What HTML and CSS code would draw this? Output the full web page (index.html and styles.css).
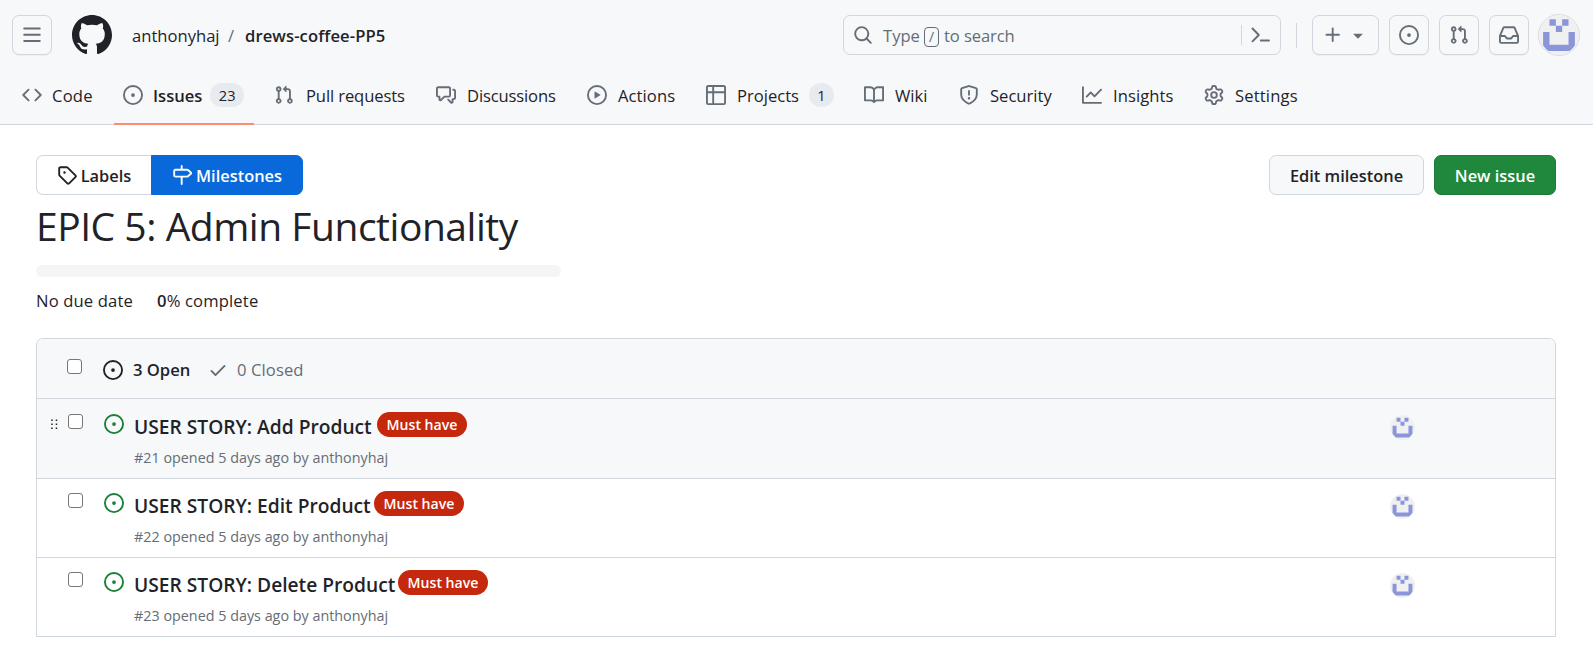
FILE: index.html
```html
<!DOCTYPE html>
<html lang="en">
<head>
<meta charset="utf-8">
<title>EPIC 5: Admin Functionality Milestone</title>
<link rel="stylesheet" href="styles.css">
</head>
<body>
<svg class="sprite" aria-hidden="true">
  <symbol id="issue" viewBox="0 0 16 16"><path d="M8 9.5a1.5 1.5 0 1 0 0-3 1.5 1.5 0 0 0 0 3Z"/><path d="M8 0a8 8 0 1 1 0 16A8 8 0 0 1 8 0ZM1.5 8a6.500 6.500 0 1 0 13 0 6.500 6.500 0 0 0-13 0Z"/></symbol>
  <symbol id="pull" viewBox="0 0 16 16"><path d="M1.500 3.250a2.250 2.250 0 1 1 3 2.122v5.256a2.251 2.251 0 1 1-1.500 0V5.372A2.250 2.250 0 0 1 1.500 3.250Zm5.677-.177L9.573.677A.250.250 0 0 1 10 .854V2.500h1A2.500 2.500 0 0 1 13.500 5v5.628a2.251 2.251 0 1 1-1.500 0V5a1 1 0 0 0-1-1h-1v1.646a.250.250 0 0 1-.427.177L7.177 3.427a.250.250 0 0 1 0-.354ZM3.750 2.500a.750.750 0 1 0 0 1.500.750.750 0 0 0 0-1.500Zm0 9.500a.750.750 0 1 0 0 1.500.750.750 0 0 0 0-1.500Zm8.250.750a.750.750 0 1 0 1.500 0 .750.750 0 0 0-1.500 0Z"/></symbol>
  <symbol id="avatar" viewBox="0 0 42 42"><circle cx="21" cy="21" r="21" fill="#f0f0f0"/><path fill="#8b96da" d="M11 4.500h6.700v6.700H11zM24.300 4.500H31v6.700h-6.700zM17.700 11.200h6.600v6.700h-6.600zM4.300 17.900H11v13.300h20V17.900h6.700v13.800c-1.700 2.500-3.500 4.500-5.700 6.200H10c-2.200-1.700-4-3.700-5.700-6.200z"/></symbol>
</svg>

<header class="header">
  <div class="topbar">
    <button class="square"><svg class="icon" viewBox="0 0 16 16"><path d="M1 2.750A.750.750 0 0 1 1.750 2h12.500a.750.750 0 0 1 0 1.500H1.750A.750.750 0 0 1 1 2.750Zm0 5A.750.750 0 0 1 1.750 7h12.500a.750.750 0 0 1 0 1.500H1.750A.750.750 0 0 1 1 7.750ZM1.750 12h12.500a.750.750 0 0 1 0 1.500H1.750a.750.750 0 0 1 0-1.500Z"/></svg></button>
    <svg class="logo" viewBox="0 0 16 16"><path d="M8 0c4.420 0 8 3.580 8 8a8.013 8.013 0 0 1-5.450 7.590c-.400.080-.550-.170-.550-.380 0-.270.010-1.130.010-2.200 0-.750-.250-1.230-.540-1.480 1.780-.200 3.650-.880 3.650-3.950 0-.880-.310-1.590-.820-2.150.080-.200.360-1.020-.080-2.120 0 0-.670-.220-2.200.820-.640-.180-1.320-.270-2-.270-.680 0-1.360.090-2 .270-1.530-1.030-2.200-.820-2.200-.820-.440 1.100-.160 1.920-.080 2.120-.510.560-.820 1.280-.820 2.150 0 3.060 1.860 3.750 3.640 3.950-.230.200-.440.550-.510 1.070-.460.210-1.610.550-2.330-.660-.150-.240-.600-.830-1.230-.820-.670.010-.270.380.010.530.340.190.730.900.820 1.130.160.450.680 1.310 2.690.940 0 .670.010 1.300.010 1.490 0 .210-.150.450-.550.380A7.995 7.995 0 0 1 0 8c0-4.420 3.580-8 8-8Z"/></svg>
    <div class="crumbs"><span class="owner">anthonyhaj</span><span class="slash">/</span><span class="repo">drews-coffee-PP5</span></div>
    <div class="search">
      <svg class="search-icon" viewBox="0 0 16 16"><path d="M10.680 11.740a6 6 0 0 1-7.922-8.982 6 6 0 0 1 8.982 7.922l3.040 3.040a.749.749 0 0 1-.326 1.275.749.749 0 0 1-.734-.215ZM11.500 7a4.499 4.499 0 1 0-8.997 0A4.499 4.499 0 0 0 11.500 7Z"/></svg>
      <span class="type">Type</span><kbd>/</kbd><span class="to-search">to search</span>
      <span class="rule"></span>
      <svg class="terminal" viewBox="0 0 19 16"><path d="M1.500 1.500 7.800 8l-6.300 6.300M9.800 13.500H18" fill="none" stroke="currentColor" stroke-width="1.900" stroke-linecap="round" stroke-linejoin="round"/></svg>
    </div>
    <span class="rule tall"></span>
    <button class="square plus">
      <svg class="icon" viewBox="0 0 16 16"><path d="M7.750 2a.750.750 0 0 1 .750.750V7h4.250a.750.750 0 0 1 0 1.500H8.500v4.250a.750.750 0 0 1-1.500 0V8.500H2.750a.750.750 0 0 1 0-1.500H7V2.750A.750.750 0 0 1 7.750 2Z"/></svg>
      <svg class="icon" viewBox="0 0 16 16"><path d="m4.427 7.427 3.396 3.396a.250.250 0 0 0 .354 0l3.396-3.396A.250.250 0 0 0 11.396 7H4.604a.250.250 0 0 0-.177.427Z"/></svg>
    </button>
    <button class="square"><svg class="icon"><use href="#issue"/></svg></button>
    <button class="square"><svg class="icon"><use href="#pull"/></svg></button>
    <button class="square"><svg class="icon" viewBox="0 0 16 16"><path d="M2.800 2.060A1.750 1.750 0 0 1 4.410 1h7.180c.700 0 1.333.417 1.610 1.060l2.740 6.395c.040.093.060.194.060.295v4.500A1.750 1.750 0 0 1 14.250 15H1.750A1.750 1.750 0 0 1 0 13.250v-4.500c0-.101.020-.202.060-.295Zm1.610.440a.250.250 0 0 0-.230.152L1.887 8H4.750a.750.750 0 0 1 .600.300L6.625 10h2.750l1.275-1.700a.750.750 0 0 1 .600-.300h2.863L11.820 2.652a.250.250 0 0 0-.230-.152Zm10.090 7h-2.875l-1.275 1.700a.750.750 0 0 1-.600.300h-3.500a.750.750 0 0 1-.600-.300L4.375 9.500H1.500v3.750c0 .138.112.250.250.250h12.500a.250.250 0 0 0 .250-.250Z"/></svg></button>
    <svg class="me"><use href="#avatar"/></svg>
  </div>
  <nav class="tabs">
    <a class="tab t-code"><svg class="icon" viewBox="0 0 16 16"><path d="m11.280 3.220 4.250 4.250a.750.750 0 0 1 0 1.060l-4.250 4.250a.749.749 0 0 1-1.275-.326.749.749 0 0 1 .215-.734L13.940 8l-3.720-3.720a.749.749 0 0 1 .326-1.275.749.749 0 0 1 .734.215Zm-6.560 0a.751.751 0 0 1 1.042.018.751.751 0 0 1 .018 1.042L2.060 8l3.720 3.720a.749.749 0 0 1-.326 1.275.749.749 0 0 1-.734-.215L.470 8.530a.750.750 0 0 1 0-1.060Z"/></svg><span>Code</span></a>
    <a class="tab t-issues active"><svg class="icon"><use href="#issue"/></svg><span>Issues</span><b class="counter">23</b></a>
    <a class="tab t-pulls"><svg class="icon"><use href="#pull"/></svg><span>Pull requests</span></a>
    <a class="tab t-disc"><svg class="icon" viewBox="0 0 16 16"><path d="M1.750 1h8.500c.966 0 1.750.784 1.750 1.750v5.500A1.750 1.750 0 0 1 10.250 10H7.061l-2.574 2.573A1.458 1.458 0 0 1 2 11.543V10h-.250A1.750 1.750 0 0 1 0 8.250v-5.500C0 1.784.784 1 1.750 1ZM1.500 2.750v5.500c0 .138.112.250.250.250h1a.750.750 0 0 1 .750.750v2.190l2.720-2.720a.749.749 0 0 1 .530-.220h3.500a.250.250 0 0 0 .250-.250v-5.500a.250.250 0 0 0-.250-.250h-8.500a.250.250 0 0 0-.250.250Zm13 2a.250.250 0 0 0-.250-.250h-.500a.750.750 0 0 1 0-1.500h.500c.966 0 1.750.784 1.750 1.750v5.500A1.750 1.750 0 0 1 14.250 12H14v1.543a1.458 1.458 0 0 1-2.487 1.030L9.220 12.280a.749.749 0 0 1 .326-1.275.749.749 0 0 1 .734.215l2.220 2.220v-2.190a.750.750 0 0 1 .750-.750h1a.250.250 0 0 0 .250-.250Z"/></svg><span>Discussions</span></a>
    <a class="tab t-actions"><svg class="icon" viewBox="0 0 16 16"><path d="M8 0a8 8 0 1 1 0 16A8 8 0 0 1 8 0ZM1.500 8a6.500 6.500 0 1 0 13 0 6.500 6.500 0 0 0-13 0Zm4.879-2.773 4.264 2.559a.250.250 0 0 1 0 .428l-4.264 2.559A.250.250 0 0 1 6 10.559V5.442a.250.250 0 0 1 .379-.215Z"/></svg><span>Actions</span></a>
    <a class="tab t-proj"><svg class="icon" viewBox="0 0 16 16"><path d="M0 1.750C0 .784.784 0 1.750 0h12.500C15.216 0 16 .784 16 1.750v12.500A1.750 1.750 0 0 1 14.250 16H1.750A1.750 1.750 0 0 1 0 14.250ZM6.500 6.500v8h7.750a.250.250 0 0 0 .250-.250V6.500Zm8-1.500V1.750a.250.250 0 0 0-.250-.250H6.500V5Zm-13 1.500v7.750c0 .138.112.250.250.250H5v-8ZM5 5V1.500H1.750a.250.250 0 0 0-.250.250V5Z"/></svg><span>Projects</span><b class="counter">1</b></a>
    <a class="tab t-wiki"><svg class="icon" viewBox="0 0 16 16"><path d="M0 1.750A.750.750 0 0 1 .750 1h4.253c1.227 0 2.317.590 3 1.501A3.743 3.743 0 0 1 11.006 1h4.245a.750.750 0 0 1 .750.750v10.500a.750.750 0 0 1-.750.750h-4.507a2.250 2.250 0 0 0-1.591.659l-.622.621a.750.750 0 0 1-1.060 0l-.622-.621A2.250 2.250 0 0 0 5.258 13H.750a.750.750 0 0 1-.750-.750Zm7.251 10.324.004-5.073-.002-2.253A2.250 2.250 0 0 0 5.003 2.500H1.500v9h3.757a3.750 3.750 0 0 1 1.994.574ZM8.755 4.750l-.004 7.322a3.752 3.752 0 0 1 1.992-.572H14.500v-9h-3.495a2.250 2.250 0 0 0-2.250 2.250Z"/></svg><span>Wiki</span></a>
    <a class="tab t-sec"><svg class="icon" viewBox="0 0 16 16"><path d="M7.467.133a1.748 1.748 0 0 1 1.066 0l5.250 1.680A1.750 1.750 0 0 1 15 3.480V7c0 1.566-.320 3.182-1.303 4.682-.983 1.498-2.585 2.813-5.032 3.855a1.697 1.697 0 0 1-1.330 0c-2.447-1.042-4.049-2.357-5.032-3.855C1.320 10.182 1 8.566 1 7V3.480a1.755 1.755 0 0 1 1.217-1.667Zm.610 1.429a.250.250 0 0 0-.153 0l-5.250 1.680a.250.250 0 0 0-.174.238V7c0 1.358.275 2.666 1.057 3.860.784 1.194 2.121 2.340 4.366 3.297a.196.196 0 0 0 .154 0c2.245-.956 3.582-2.104 4.366-3.298C13.225 9.666 13.500 8.360 13.500 7V3.480a.251.251 0 0 0-.174-.237l-5.250-1.680ZM8.750 4.750v3a.750.750 0 0 1-1.500 0v-3a.750.750 0 0 1 1.500 0ZM9 10.500a1 1 0 1 1-2 0 1 1 0 0 1 2 0Z"/></svg><span>Security</span></a>
    <a class="tab t-ins"><svg class="icon" viewBox="0 0 16 16"><path d="M1.500 1.750V13.500h13.750a.750.750 0 0 1 0 1.500H.750a.750.750 0 0 1-.750-.750V1.750a.750.750 0 0 1 1.500 0Zm14.280 2.530-5.250 5.250a.750.750 0 0 1-1.060 0L7 7.060 4.280 9.780a.751.751 0 0 1-1.042-.018.751.751 0 0 1-.018-1.042l3.250-3.250a.750.750 0 0 1 1.060 0L10 7.940l4.720-4.720a.751.751 0 0 1 1.042.018.751.751 0 0 1 .018 1.042Z"/></svg><span>Insights</span></a>
    <a class="tab t-set"><svg class="icon" viewBox="0 0 16 16"><path d="M8 0a8.200 8.200 0 0 1 .701.031C9.444.095 9.990.645 10.160 1.290l.288 1.107c.018.066.079.158.212.224.231.114.454.243.668.386.123.082.233.090.299.071l1.103-.303c.644-.176 1.392.021 1.820.630.270.385.506.792.704 1.218.315.675.111 1.422-.364 1.891l-.814.806c-.049.048-.098.147-.088.294.016.257.016.515 0 .772-.010.147.038.246.088.294l.814.806c.475.469.679 1.216.364 1.891a7.977 7.977 0 0 1-.704 1.217c-.428.610-1.176.807-1.820.630l-1.102-.302c-.067-.019-.177-.011-.300.071a5.909 5.909 0 0 1-.668.386c-.133.066-.194.158-.211.224l-.290 1.106c-.168.646-.715 1.196-1.458 1.260a8.006 8.006 0 0 1-1.402 0c-.743-.064-1.289-.614-1.458-1.260l-.289-1.106c-.018-.066-.079-.158-.212-.224a5.738 5.738 0 0 1-.668-.386c-.123-.082-.233-.090-.299-.071l-1.103.303c-.644.176-1.392-.021-1.820-.630a8.120 8.120 0 0 1-.704-1.218c-.315-.675-.111-1.422.363-1.891l.815-.806c.050-.048.098-.147.088-.294a6.214 6.214 0 0 1 0-.772c.010-.147-.038-.246-.088-.294l-.815-.806C.635 6.045.431 5.298.746 4.623a7.920 7.920 0 0 1 .704-1.217c.428-.610 1.176-.807 1.820-.630l1.102.302c.067.019.177.011.300-.071.214-.143.437-.272.668-.386.133-.066.194-.158.211-.224l.290-1.106C6.009.645 6.556.095 7.299.030 7.530.010 7.764 0 8 0Zm-.571 1.525c-.036.003-.108.036-.137.146l-.289 1.105c-.147.561-.549.967-.998 1.189-.173.086-.340.183-.500.290-.417.278-.970.423-1.529.270l-1.103-.303c-.109-.030-.175.016-.195.045-.220.312-.412.644-.573.990-.014.031-.021.110.059.190l.815.806c.411.406.562.957.530 1.456a4.709 4.709 0 0 0 0 .582c.032.499-.119 1.050-.530 1.456l-.815.806c-.081.080-.073.159-.059.190.162.346.353.677.573.989.020.030.085.076.195.046l1.102-.303c.560-.153 1.113-.008 1.530.270.161.107.328.204.501.290.447.222.850.629.997 1.189l.289 1.105c.029.109.101.143.137.146a6.600 6.600 0 0 0 1.142 0c.036-.003.108-.036.137-.146l.289-1.105c.147-.561.549-.967.998-1.189.173-.086.340-.183.500-.290.417-.278.970-.423 1.529-.270l1.103.303c.109.029.175-.016.195-.045.220-.313.411-.644.573-.990.014-.031.021-.110-.059-.190l-.815-.806c-.411-.406-.562-.957-.530-1.456a4.709 4.709 0 0 0 0-.582c-.032-.499.119-1.050.530-1.456l.815-.806c.081-.080.073-.159.059-.190a6.464 6.464 0 0 0-.573-.989c-.020-.030-.085-.076-.195-.046l-1.102.303c-.560.153-1.113.008-1.530-.270a4.440 4.440 0 0 0-.501-.290c-.447-.222-.850-.629-.997-1.189l-.289-1.105c-.029-.110-.101-.143-.137-.146a6.600 6.600 0 0 0-1.142 0ZM11 8a3 3 0 1 1-6 0 3 3 0 0 1 6 0ZM9.500 8a1.500 1.500 0 1 0-3.001.001A1.500 1.500 0 0 0 9.500 8Z"/></svg><span>Settings</span></a>
  </nav>
</header>

<main class="main">
  <div class="actions">
    <a class="btn labels"><svg class="icon" viewBox="0 0 16 16"><path d="M1 7.775V2.750C1 1.784 1.784 1 2.750 1h5.025c.464 0 .910.184 1.238.513l6.250 6.250a1.750 1.750 0 0 1 0 2.474l-5.026 5.026a1.750 1.750 0 0 1-2.474 0l-6.250-6.250A1.752 1.752 0 0 1 1 7.775Zm1.500 0c0 .066.026.130.073.177l6.250 6.250a.250.250 0 0 0 .354 0l5.025-5.025a.250.250 0 0 0 0-.354l-6.250-6.250a.250.250 0 0 0-.177-.073H2.750a.250.250 0 0 0-.250.250ZM6 5a1 1 0 1 1 0 2 1 1 0 0 1 0-2Z"/></svg><span>Labels</span></a>
    <a class="btn milestones"><svg class="icon" viewBox="0 0 16 16"><path d="M7.750 0a.750.750 0 0 1 .750.750V3h3.634c.414 0 .814.147 1.130.414l2.070 1.750a1.750 1.750 0 0 1 0 2.672l-2.070 1.750a1.750 1.750 0 0 1-1.130.414H8.500v5.250a.750.750 0 0 1-1.500 0V10H2.750A1.750 1.750 0 0 1 1 8.250v-3.500C1 3.784 1.784 3 2.750 3H7V.750A.750.750 0 0 1 7.750 0Zm4.384 8.500a.250.250 0 0 0 .161-.060l2.070-1.750a.248.248 0 0 0 0-.380l-2.070-1.750a.250.250 0 0 0-.161-.060H2.750a.250.250 0 0 0-.250.250v3.500c0 .138.112.250.250.250h9.384Z"/></svg><span>Milestones</span></a>
    <a class="btn edit"><span>Edit milestone</span></a>
    <a class="btn new"><span>New issue</span></a>
  </div>
  <h1>EPIC 5: Admin Functionality</h1>
  <div class="progress"></div>
  <div class="meta"><span class="due">No due date</span><span class="done"><b>0</b>% complete</span></div>

  <section class="box">
    <div class="box-head">
      <input type="checkbox">
      <svg class="icon"><use href="#issue"/></svg>
      <span class="open">3 Open</span>
      <svg class="icon check" viewBox="0 0 16 16"><path d="M13.780 4.220a.750.750 0 0 1 0 1.060l-7.250 7.250a.750.750 0 0 1-1.060 0L2.220 9.280a.751.751 0 0 1 .018-1.042.751.751 0 0 1 1.042-.018L6 10.940l6.720-6.720a.750.750 0 0 1 1.060 0Z"/></svg>
      <span class="closed">0 Closed</span>
    </div>
    <div class="row hovered">
      <svg class="grip" viewBox="0 0 7 12"><path d="M.200.500h1.500V2H.200zM4.700.500h1.500V2H4.700zM.200 4.500h1.500V6H.200zM4.700 4.500h1.500V6H4.700zM.200 8.500h1.500V10H.200zM4.700 8.500h1.500V10H4.700z"/></svg>
      <input type="checkbox"><svg class="icon state"><use href="#issue"/></svg>
      <div class="issue"><div class="line"><a class="title add">USER STORY: Add Product</a><span class="label">Must have</span></div><div class="sub">#21 opened 5 days ago by anthonyhaj</div></div>
      <svg class="assignee"><use href="#avatar"/></svg>
    </div>
    <div class="row">
      <span class="grip"></span>
      <input type="checkbox"><svg class="icon state"><use href="#issue"/></svg>
      <div class="issue"><div class="line"><a class="title editp">USER STORY: Edit Product</a><span class="label">Must have</span></div><div class="sub">#22 opened 5 days ago by anthonyhaj</div></div>
      <svg class="assignee"><use href="#avatar"/></svg>
    </div>
    <div class="row">
      <span class="grip"></span>
      <input type="checkbox"><svg class="icon state"><use href="#issue"/></svg>
      <div class="issue"><div class="line"><a class="title deletep">USER STORY: Delete Product</a><span class="label">Must have</span></div><div class="sub">#23 opened 5 days ago by anthonyhaj</div></div>
      <svg class="assignee"><use href="#avatar"/></svg>
    </div>
  </section>
</main>
</body>
</html>
```
FILE: styles.css
```css
* { box-sizing: border-box; }
body { margin: 0; background: #fff; color: #1f2328; font: 16.600px/26px "Open Sans", "Noto Sans", sans-serif; height: 649px; overflow: hidden; }
svg { display: block; flex: none; fill: currentColor; }
span, a, h1, .sub { white-space: nowrap; }
.sprite { position: absolute; width: 0; height: 0; }
.icon { width: 20px; height: 20px; }

/* Header */
.header { height: 125px; background: #f6f8fa; border-bottom: 1px solid #d0d7de; }
.topbar { display: flex; align-items: center; height: 70px; padding-left: 12px; }
.square { display: flex; align-items: center; justify-content: center; flex: none; width: 40px; height: 40px; margin: 0 10px 0 0; padding: 0; border: 1px solid #d0d7de; border-radius: 7px; background: #f6f8fa; color: #656d76; box-shadow: 0 1px 0 rgba(31,35,40,.04); }
.square:first-child { margin-right: 20px; }
.logo { width: 40px; height: 40px; color: #1f2328; }
.crumbs { display: flex; margin-left: 20px; padding-top: 2px; width: 711px; }
.owner { width: 96px; }
.slash { width: 17px; color: #656d76; }
.repo { font-weight: 600; letter-spacing: .100px; }
.search { display: flex; align-items: center; flex: none; width: 438px; height: 40px; padding-left: 9px; border: 1px solid #d0d7de; border-radius: 7px; color: #656d76; }
.search-icon { width: 20px; height: 20px; margin-right: 10px; }
.type { width: 41px; padding-top: 2px; }
kbd { width: 15px; height: 20px; margin: 3px 5px 0 0; border: 1px solid #656d76; border-radius: 4px; font: 14px/18px "Open Sans", sans-serif; text-align: center; }
.to-search { width: 297px; padding-top: 2px; letter-spacing: -.100px; }
.rule { width: 1px; height: 20px; background: #d0d7de; }
.terminal { width: 19px; height: 16px; margin-left: 9px; }
.rule.tall { height: 25px; margin: 0 15px; }
.plus { width: 67px; gap: 5px; }
.me { width: 42px; height: 42px; margin-left: -1px; border: 1px solid #d8dbdf; border-radius: 50%; }

/* Repository tabs */
.tabs { display: flex; height: 55px; padding-left: 12px; }
.tab { display: flex; align-items: center; flex: none; height: 55px; padding: 0 0 5px 10px; }
.tab .icon { color: #656d76; margin-right: 11px; }
.tab span { padding-top: 2px; }
.t-code { width: 102px; letter-spacing: .200px; }
.t-code .icon { margin-right: 10px; }
.t-issues { width: 140px; margin-right: 10px; padding-left: 9px; }
.t-issues .icon { margin-right: 10px; }
.t-pulls { width: 162px; letter-spacing: -.120px; }
.t-pulls .icon { margin-right: 12px; }
.t-disc { width: 151px; letter-spacing: -.150px; }
.t-actions { width: 119px; letter-spacing: .080px; }
.t-proj { width: 158px; }
.t-wiki { width: 95px; }
.t-sec { width: 123px; }
.t-ins { width: 122px; letter-spacing: .080px; }
.t-set { letter-spacing: .150px; }
.active { border-bottom: 2px solid #fd8c73; padding-bottom: 3px; font-weight: 600; }
.counter { display: block; margin-left: auto; height: 24px; padding: 0 8.500px; border-radius: 12px; background: #e7eaef; font-size: 14.600px; font-weight: 500; line-height: 25px; }
.active .counter { margin-right: 10px; }
.t-proj .counter { margin-right: 20px; }

/* Milestone summary */
.main { padding: 30px 37px 0 36px; }
.actions { display: flex; height: 40px; }
.btn { display: flex; align-items: center; justify-content: center; height: 40px; border: 1px solid #d0d7de; border-radius: 7px; font-weight: 600; font-size: 16.400px; }
.btn span { padding-top: 2px; }
.btn .icon { margin-right: 4px; }
.labels { width: 115px; border-right: 0; border-radius: 7px 0 0 7px; }
.milestones { width: 152px; border-color: #0969da; border-radius: 0 7px 7px 0; background: #0969da; color: #fff; }
.edit { width: 155px; margin-left: auto; background: #f6f8fa; }
.new { width: 122px; margin-left: 10px; border-color: #1f7a38; background: #1f883d; color: #fff; }
h1 { margin: 4px 0 0; height: 57px; font-size: 39px; letter-spacing: -.470px; font-weight: 400; line-height: 54px; }
.progress { width: 525px; height: 12px; margin-top: 9px; border-radius: 6px; background: #f4f5f7; }
.meta { display: flex; margin-top: 11px; height: 26px; letter-spacing: .150px; }
.meta b { font-weight: 600; }
.due { width: 121px; }

/* Issue list */
.box { margin-top: 24px; border: 1px solid #d0d7de; border-radius: 7px 7px 0 0; overflow: hidden; }
input { appearance: none; flex: none; width: 15px; height: 15px; margin: 0; border: 1px solid #767676; border-radius: 3px; background: #fff; }
.box-head { display: flex; height: 59px; padding: 20px 0 0 30px; background: #f6f8fa; }
.box-head .icon { margin: 1px 10px 0 21px; }
.open { width: 75px; line-height: 22px; font-weight: 600; }
.box-head .check { margin: 1px 9px 0 0; color: #656d76; }
.closed { line-height: 22px; color: #656d76; letter-spacing: .100px; }
.row { display: flex; height: 79px; padding: 14px 140px 0 14px; border-top: 1px solid #d0d7de; }
.hovered { height: 80px; padding-top: 15px; background: #f6f8fa; }
.grip { width: 7px; height: 12px; margin: 5px 10px 0 0; }
.state { margin: 0 10px 0 21px; color: #1a7f37; }
.issue { flex: 1; }
.line { display: flex; height: 25px; margin-top: -2px; }
.title { font-size: 19.200px; font-weight: 600; line-height: 29px; }
.add { width: 243px; }
.editp { width: 240px; }
.deletep { width: 264px; }
.label { width: 90px; height: 25px; border-radius: 13px; background: #c5280c; color: #fff; font-size: 14.100px; font-weight: 600; line-height: 25px; text-align: center; }
.sub { margin-top: 8px; color: #656d76; font-size: 14.350px; }
.assignee { width: 25px; height: 25px; margin-top: 1px; }
```
